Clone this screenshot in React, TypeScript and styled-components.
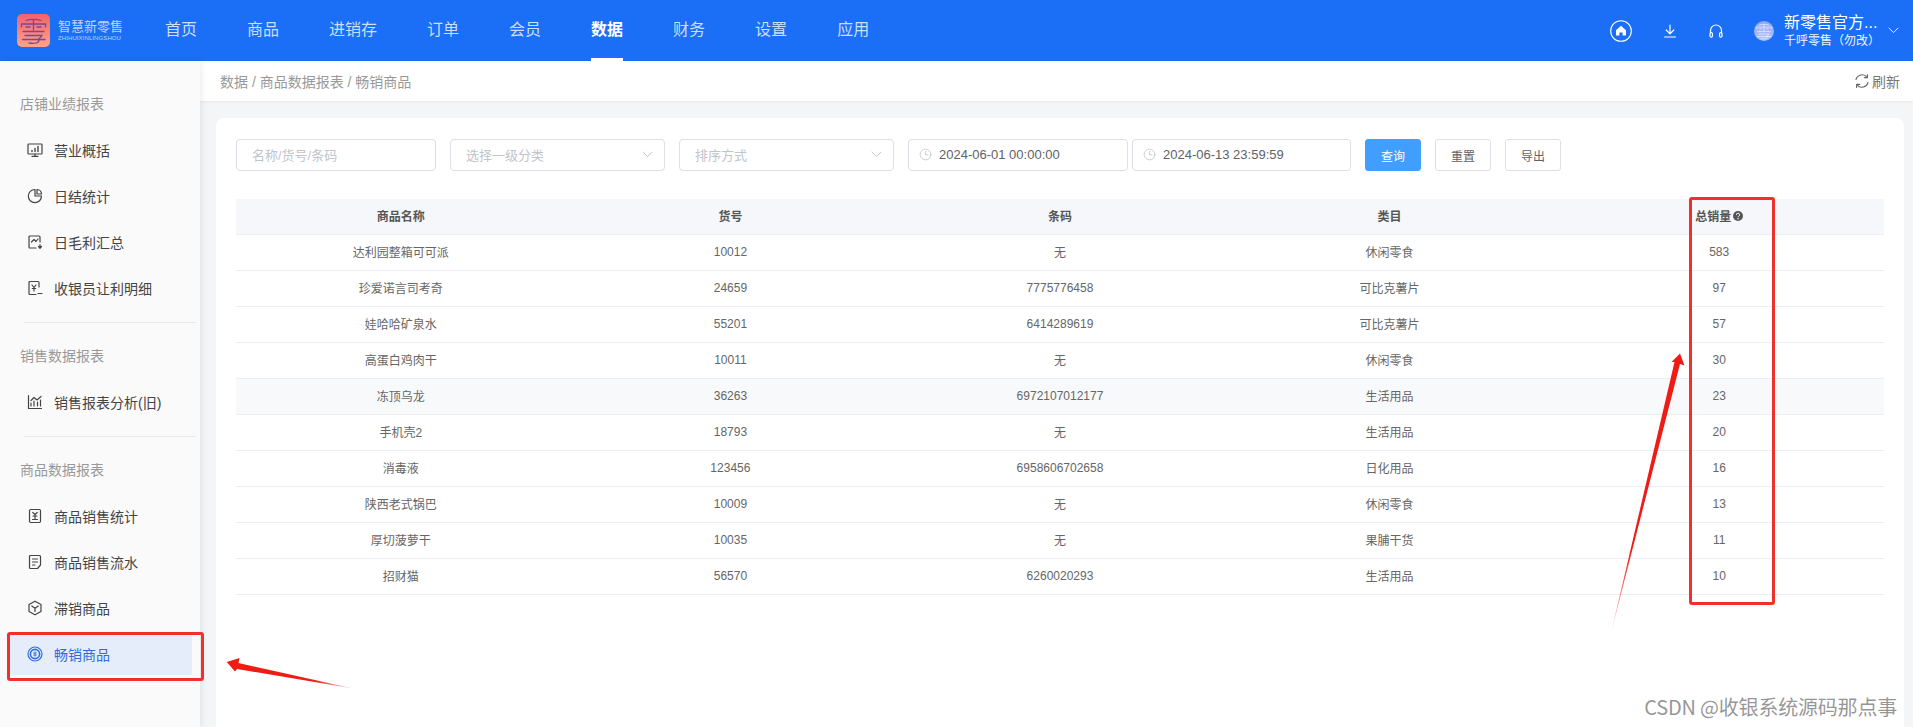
import React from "react";
import styled, { createGlobalStyle } from "styled-components";

const Global = createGlobalStyle`
  html, body { margin: 0; padding: 0; height: 100%; overflow: hidden; background: #f4f5f7; }
  * { box-sizing: border-box; }
  body { font-family: "Liberation Sans", "Noto Sans CJK SC", sans-serif; color: #666; }
`;

const Page = styled.div`
  position: relative;
  width: 100%;
  height: 100vh;
  display: flex;
  flex-direction: column;
  overflow: hidden;
`;

const Header = styled.header`
  flex: 0 0 61px;
  height: 61px;
  background: #1b6ef6;
  display: flex;
  align-items: stretch;
  padding: 0 14px 0 17px;
  color: #fff;
`;

const Brand = styled.div`
  flex: 0 0 148px;
  display: flex;
  align-items: center;
  gap: 8px;
`;

const BrandText = styled.div`
  display: flex;
  flex-direction: column;
  gap: 1px;
  color: #bcd6ff;
`;

const BrandName = styled.span`
  font-size: 13px;
  line-height: 15px;
  letter-spacing: 0;
  white-space: nowrap;
`;

const BrandSub = styled.span`
  font-size: 6px;
  line-height: 7px;
  letter-spacing: 0.1px;
  white-space: nowrap;
`;

const Nav = styled.nav`
  display: flex;
  gap: 50px;
`;

const NavItem = styled.a<{ $active?: boolean }>`
  position: relative;
  font-size: 16px;
  line-height: 59px;
  height: 61px;
  color: ${(p) => (p.$active ? "#fff" : "rgba(255,255,255,0.78)")};
  font-weight: ${(p) => (p.$active ? 700 : 400)};
  border-bottom: 3px solid ${(p) => (p.$active ? "#fff" : "transparent")};
`;

const HeaderRight = styled.div`
  margin-left: auto;
  display: flex;
  align-items: center;
  gap: 30px;
`;

const Account = styled.div`
  display: flex;
  align-items: center;
  gap: 10px;
`;

const AccountText = styled.div`
  width: 94px;
  display: flex;
  flex-direction: column;
  white-space: nowrap;
`;

const AccountName = styled.span`
  font-size: 16px;
  line-height: 20px;
  color: #fff;
`;

const AccountSub = styled.span`
  font-size: 12px;
  line-height: 16px;
  color: #f0f5ff;
`;

const Body = styled.div`
  flex: 1;
  display: flex;
  min-height: 0;
`;

const Sidebar = styled.aside`
  position: relative;
  z-index: 2;
  flex: 0 0 200px;
  display: flex;
  flex-direction: column;
  background: #fafafa;
  padding-top: 31px;
  box-shadow: 2px 0 6px rgba(0, 0, 0, 0.07);
`;

const SectionTitle = styled.div`
  flex: none;
  height: 24px;
  line-height: 24px;
  margin: 0 0 13px 20px;
  font-size: 14px;
  color: #999;
`;

const MenuItem = styled.a<{ $active?: boolean }>`
  flex: none;
  display: flex;
  align-items: center;
  gap: 11px;
  height: 42px;
  margin: 0 8px 4px;
  padding-left: 19px;
  font-size: 14px;
  border-radius: 2px;
  color: ${(p) => (p.$active ? "#2f6cdc" : "#444")};
  background: ${(p) => (p.$active ? "#e5edfb" : "transparent")};
`;

const Divider = styled.div`
  flex: none;
  height: 1px;
  margin: 9px 4px 21px 24px;
  background: #e8e9eb;
`;

const Main = styled.main`
  flex: 1;
  min-width: 0;
  display: flex;
  flex-direction: column;
`;

const Crumbs = styled.div`
  position: relative;
  z-index: 1;
  flex: 0 0 40px;
  background: #fff;
  display: flex;
  align-items: center;
  justify-content: space-between;
  padding: 0 13px 1px 20px;
  font-size: 14px;
  color: #999;
  box-shadow: 0 1px 3px rgba(0, 0, 0, 0.06);
`;

const Refresh = styled.div`
  display: flex;
  align-items: center;
  gap: 2px;
  color: #777;
`;

const Content = styled.div`
  flex: 1;
  min-height: 0;
  padding: 17px 9px 0 16px;
`;

const Card = styled.section`
  height: 100%;
  background: #fff;
  border-radius: 8px 8px 0 0;
  padding: 21px 20px 0;
`;

const Filters = styled.div`
  display: flex;
  align-items: center;
  height: 32px;
  margin-bottom: 28px;
`;

const Field = styled.div<{ $w: number; $mr: number }>`
  flex: 0 0 ${(p) => p.$w}px;
  height: 32px;
  margin-right: ${(p) => p.$mr}px;
  display: flex;
  align-items: center;
  justify-content: space-between;
  padding: 0 11px 1px 15px;
  border: 1px solid #dcdfe6;
  border-radius: 4px;
  background: #fff;
  font-size: 13px;
  color: #c0c4cc;
`;

const DateField = styled(Field)`
  justify-content: flex-start;
  gap: 7px;
  padding: 0 10px 1px;
  color: #606266;
`;

const Btn = styled.button<{ $primary?: boolean }>`
  flex: 0 0 56px;
  height: 32px;
  margin-right: 14px;
  padding: 0;
  font: inherit;
  font-size: 12px;
  border-radius: 3px;
  border: 1px solid ${(p) => (p.$primary ? "#409eff" : "#dcdfe6")};
  background: ${(p) => (p.$primary ? "#409eff" : "#fff")};
  color: ${(p) => (p.$primary ? "#fff" : "#606266")};
`;

const Row = styled.div<{ $head?: boolean; $hover?: boolean }>`
  display: grid;
  grid-template-columns: repeat(5, 1fr);
  height: ${(p) => (p.$head ? "35.5px" : "36px")};
  align-items: center;
  text-align: center;
  font-size: 12px;
  padding-bottom: 1px;
  border-bottom: 1px solid #ebeef5;
  background: ${(p) => (p.$head ? "#f5f7fa" : p.$hover ? "#f8f9fb" : "#fff")};
  color: ${(p) => (p.$head ? "#555" : "#666")};
  font-weight: ${(p) => (p.$head ? 700 : 400)};
`;

const HeadCell = styled.div`
  display: flex;
  align-items: center;
  justify-content: center;
  gap: 2px;
`;

const RedBox = styled.div<{ $l: number; $t: number; $w: number; $h: number }>`
  position: absolute;
  z-index: 5;
  left: ${(p) => p.$l}px;
  top: ${(p) => p.$t}px;
  width: ${(p) => p.$w}px;
  height: ${(p) => p.$h}px;
  border: 3px solid #f0302a;
  border-radius: 3px;
  pointer-events: none;
`;

const Arrows = styled.svg`
  position: absolute;
  z-index: 5;
  left: 0;
  top: 0;
  pointer-events: none;
`;

const Watermark = styled.div`
  position: absolute;
  z-index: 6;
  right: 16px;
  top: 692px;
  font-family: "Noto Sans CJK SC", sans-serif;
  font-size: 20px;
  line-height: 29px;
  letter-spacing: -0.2px;
  color: rgba(110, 110, 110, 0.72);
  text-shadow: 0 0 1px rgba(255, 255, 255, 0.8);
  white-space: nowrap;
`;

const Ico = ({ children, size = 16, color = "#444", sw = 1.2 }: { children: React.ReactNode; size?: number; color?: string; sw?: number }) => (
  <svg width={size} height={size} viewBox="0 0 16 16" fill="none" stroke={color} strokeWidth={sw} strokeLinecap="round" strokeLinejoin="round" style={{ flex: "none" }}>
    {children}
  </svg>
);

const LogoMark = ({ size, bg, ink, round }: { size: number; bg: string; ink: string; round: number }) => (
  <svg width={size} height={size} viewBox="0 0 33 33" style={{ flex: "none" }}>
    <defs>
      <linearGradient id={bg} x1="0" y1="0" x2="0" y2="1">
        <stop offset="0" stopColor={bg === "logoBg" ? "#f2616f" : "#8fa6f5"} />
        <stop offset="1" stopColor={bg === "logoBg" ? "#ffa38e" : "#b3c2f8"} />
      </linearGradient>
    </defs>
    <rect width="33" height="33" rx={round} fill={`url(#${bg})`} />
    <g fill="none" stroke={ink} strokeWidth="1.3" strokeLinecap="round">
      <path d="M9 6.5C13 5 20 5 24 6.5" />
      <path d="M4.5 13V10H28.5V13" />
      <path d="M16.5 6V16" />
      <path d="M9 13H13M20 13H24" />
      <path d="M6 17.5H27" />
      <path d="M8 21.5H25C24 23.5 22.5 24.5 21 25.5" />
      <path d="M5.5 25.5H28" />
      <path d="M22 26C22 29 18 30 12 29" />
    </g>
  </svg>
);

const Chevron = ({ color = "#c0c4cc" }: { color?: string }) => (
  <svg width="11" height="7" viewBox="0 0 11 7" fill="none" stroke={color} strokeWidth="1" style={{ flex: "none" }}>
    <path d="M0.7 0.8L5.5 5.6L10.3 0.8" />
  </svg>
);

const Clock = () => (
  <Ico size={13} color="#c0c4cc" sw={1}>
    <circle cx="8" cy="8" r="6.6" />
    <path d="M8 4V8.4H11" />
  </Ico>
);

const icons: Record<string, React.ReactNode> = {
  monitor: (
    <>
      <rect x="1" y="2" width="14" height="10" rx="0.8" />
      <path d="M8 12V14M5 14.3H11" />
      <path d="M5 9.5V8.5M8 9.5V6.5M11 9.5V4.5" strokeWidth="1.4" />
    </>
  ),
  pie: (
    <>
      <path d="M8 1.5A6.6 6.6 0 1 0 14.5 8H8Z" />
      <path d="M10 1.5A4.8 4.8 0 0 1 14.5 6H10Z" />
    </>
  ),
  margin: (
    <>
      <path d="M9 14H3A1 1 0 0 1 2 13V3A1 1 0 0 1 3 2H12A1 1 0 0 1 13 3V8" />
      <path d="M4.5 8L7 5.5L9 7.5L11 5" />
      <path d="M13 10.5V14M11.5 12.5L13 14.3L14.5 12.5" />
    </>
  ),
  yen: (
    <>
      <path d="M9 14.5H3A1 1 0 0 1 2 13.5V2.5A1 1 0 0 1 3 1.5H11A1 1 0 0 1 12 2.5V7" />
      <path d="M5 5L7 7.5L9 5M7 7.5V11M5.3 8.5H8.7" />
      <path d="M11 13.5H15" />
    </>
  ),
  chart: (
    <>
      <path d="M1.5 1.5V14.5H14.5" />
      <path d="M4 12V9M7 12V7M10.5 12V8M13.5 12V6" />
      <path d="M4 6.5L7 3.5L10 6L14 2.5" />
    </>
  ),
  stat: (
    <>
      <rect x="2.5" y="1.5" width="11" height="13" rx="1.2" />
      <path d="M5.8 4.5L8 6.5L10.2 4.5M8 6.5V10.5M6 8H10M5.5 11.5H10.5" />
    </>
  ),
  list: (
    <>
      <path d="M3.5 1.5H12.5A1 1 0 0 1 13.5 2.5V11L10.5 14.5H3.5A1 1 0 0 1 2.5 13.5V2.5A1 1 0 0 1 3.5 1.5Z" />
      <path d="M5.5 5H10.5M5.5 8H10.5M5.5 11H8" />
    </>
  ),
  box: (
    <>
      <path d="M8 1.2L14 4.6V11.4L8 14.8L2 11.4V4.6Z" />
      <path d="M4.8 6L8 8.2L11.2 6M8 8.2V11.5" />
    </>
  ),
  hot: (
    <>
      <circle cx="8" cy="8" r="7" />
      <circle cx="8" cy="8" r="4.6" strokeWidth="1.6" />
      <path d="M6.6 7H9.4M8 5.8V10.2M6.6 9H9.4" strokeWidth="0.9" />
    </>
  ),
};

type Item = { icon: string; label: string; active?: boolean };
const groups: { title: string; items: Item[] }[] = [
  {
    title: "店铺业绩报表",
    items: [
      { icon: "monitor", label: "营业概括" },
      { icon: "pie", label: "日结统计" },
      { icon: "margin", label: "日毛利汇总" },
      { icon: "yen", label: "收银员让利明细" },
    ],
  },
  { title: "销售数据报表", items: [{ icon: "chart", label: "销售报表分析(旧)" }] },
  {
    title: "商品数据报表",
    items: [
      { icon: "stat", label: "商品销售统计" },
      { icon: "list", label: "商品销售流水" },
      { icon: "box", label: "滞销商品" },
      { icon: "hot", label: "畅销商品", active: true },
    ],
  },
];

const nav = ["首页", "商品", "进销存", "订单", "会员", "数据", "财务", "设置", "应用"];

const rows = [
  ["达利园整箱可可派", "10012", "无", "休闲零食", "583"],
  ["珍爱诺言司考奇", "24659", "7775776458", "可比克薯片", "97"],
  ["娃哈哈矿泉水", "55201", "6414289619", "可比克薯片", "57"],
  ["高蛋白鸡肉干", "10011", "无", "休闲零食", "30"],
  ["冻顶乌龙", "36263", "6972107012177", "生活用品", "23"],
  ["手机壳2", "18793", "无", "生活用品", "20"],
  ["消毒液", "123456", "6958606702658", "日化用品", "16"],
  ["陕西老式锅巴", "10009", "无", "休闲零食", "13"],
  ["厚切菠萝干", "10035", "无", "果脯干货", "11"],
  ["招财猫", "56570", "6260020293", "生活用品", "10"],
];

export default function App() {
  return (
    <Page>
      <Global />
      <Header>
        <Brand>
          <LogoMark size={33} bg="logoBg" ink="#7a4a90" round={5} />
          <BrandText>
            <BrandName>智慧新零售</BrandName>
            <BrandSub>ZHIHUIXINLINGSHOU</BrandSub>
          </BrandText>
        </Brand>
        <Nav>
          {nav.map((n) => (
            <NavItem key={n} $active={n === "数据"}>
              {n}
            </NavItem>
          ))}
        </Nav>
        <HeaderRight>
          <svg width="22" height="22" viewBox="0 0 22 22" fill="none">
            <circle cx="11" cy="11" r="10.3" stroke="#fff" strokeWidth="1.1" />
            <path d="M11 5.8L16 10.2V15.4H12.6V12.4H9.4V15.4H6V10.2Z" fill="#fff" />
          </svg>
          <Ico color="#fff" sw={1.2}>
            <path d="M8 2V10.5M4.2 7L8 10.8L11.8 7" />
            <path d="M2.5 14H13.5" />
          </Ico>
          <Ico color="#fff" sw={1.2}>
            <path d="M2.5 10V7.5A5.5 5.5 0 0 1 13.5 7.5V10" />
            <rect x="2" y="9.5" width="2.4" height="4.6" rx="1.2" />
            <rect x="11.6" y="9.5" width="2.4" height="4.6" rx="1.2" />
          </Ico>
          <Account>
            <LogoMark size={20} bg="avatarBg" ink="#e9edff" round={16.5} />
            <AccountText>
              <AccountName>新零售官方...</AccountName>
              <AccountSub>千呼零售（勿改）</AccountSub>
            </AccountText>
            <Chevron color="#dfeaff" />
          </Account>
        </HeaderRight>
      </Header>
      <Body>
        <Sidebar>
          {groups.map((g, i) => (
            <React.Fragment key={g.title}>
              <SectionTitle>{g.title}</SectionTitle>
              {g.items.map((it) => (
                <MenuItem key={it.label} $active={it.active}>
                  <Ico color={it.active ? "#2f6cdc" : "#444"}>{icons[it.icon]}</Ico>
                  {it.label}
                </MenuItem>
              ))}
              {i < groups.length - 1 && <Divider />}
            </React.Fragment>
          ))}
        </Sidebar>
        <Main>
          <Crumbs>
            <span>数据 / 商品数据报表 / 畅销商品</span>
            <Refresh>
              <Ico color="#666" sw={1.1}>
                <path d="M2 6.5A6.3 6.3 0 0 1 13 4.2M14 9.5A6.3 6.3 0 0 1 3 11.8" />
                <path d="M13.4 1.5V4.6H10.3M2.6 14.5V11.4H5.7" />
              </Ico>
              刷新
            </Refresh>
          </Crumbs>
          <Content>
            <Card>
              <Filters>
                <Field $w={200} $mr={14}>名称/货号/条码</Field>
                <Field $w={215} $mr={14}>
                  选择一级分类
                  <Chevron />
                </Field>
                <Field $w={215} $mr={14}>
                  排序方式
                  <Chevron />
                </Field>
                <DateField $w={220} $mr={4}>
                  <Clock />
                  2024-06-01 00:00:00
                </DateField>
                <DateField $w={219} $mr={14}>
                  <Clock />
                  2024-06-13 23:59:59
                </DateField>
                <Btn $primary>查询</Btn>
                <Btn>重置</Btn>
                <Btn>导出</Btn>
              </Filters>
              <Row $head>
                <HeadCell>商品名称</HeadCell>
                <HeadCell>货号</HeadCell>
                <HeadCell>条码</HeadCell>
                <HeadCell>类目</HeadCell>
                <HeadCell>
                  总销量
                  <svg width="10" height="10" viewBox="0 0 10 10">
                    <circle cx="5" cy="5" r="5" fill="#555" />
                    <path d="M3.4 3.9A1.6 1.6 0 1 1 5.6 5.3C5.1 5.6 5 5.8 5 6.3" fill="none" stroke="#fff" strokeWidth="1" />
                    <circle cx="5" cy="7.8" r="0.7" fill="#fff" />
                  </svg>
                </HeadCell>
              </Row>
              {rows.map((r, i) => (
                <Row key={r[0]} $hover={i === 4}>
                  {r.map((c, j) => (
                    <div key={j}>{c}</div>
                  ))}
                </Row>
              ))}
            </Card>
          </Content>
        </Main>
      </Body>
      <RedBox $l={7} $t={632} $w={197} $h={49} />
      <RedBox $l={1689} $t={197} $w={86} $h={408} />
      <Arrows width="1913" height="727" viewBox="0 0 1913 727">
        <defs>
          <linearGradient id="tailLeft" gradientUnits="userSpaceOnUse" x1="227" y1="662" x2="353" y2="688">
            <stop offset="0" stopColor="#ee1c14" />
            <stop offset="0.7" stopColor="#ee1c14" />
            <stop offset="1" stopColor="#ee1c14" stopOpacity="0.25" />
          </linearGradient>
          <linearGradient id="tailRight" gradientUnits="userSpaceOnUse" x1="1680" y1="354" x2="1611" y2="633">
            <stop offset="0" stopColor="#ee1c14" />
            <stop offset="0.7" stopColor="#ee1c14" />
            <stop offset="1" stopColor="#ee1c14" stopOpacity="0.25" />
          </linearGradient>
        </defs>
        <path d="M226.7 662L239.5 658L238.5 663L353 688.5L237 669L235 671.5Z" fill="url(#tailLeft)" />
        <path d="M1680 353.5L1684.5 365.5L1680 364L1611 633L1674.5 362L1671.5 362Z" fill="url(#tailRight)" />
      </Arrows>
      <Watermark>CSDN @收银系统源码那点事</Watermark>
    </Page>
  );
}
